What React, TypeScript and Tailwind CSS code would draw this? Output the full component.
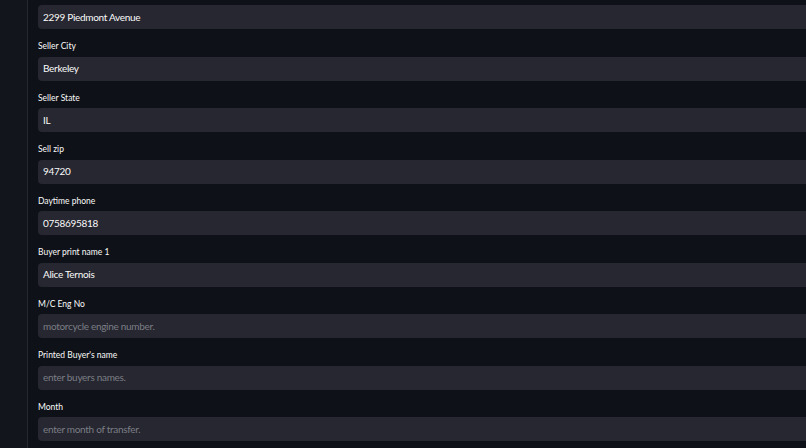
const fields = [
  { label: "Seller City", value: "Berkeley" },
  { label: "Seller State", value: "IL" },
  { label: "Sell zip", value: "94720" },
  { label: "Daytime phone", value: "0758695818" },
  { label: "Buyer print name 1", value: "Alice Ternois" },
  { label: "M/C Eng No", placeholder: "motorcycle engine number." },
  { label: "Printed Buyer's name", placeholder: "enter buyers names." },
  { label: "Month", placeholder: "enter month of transfer." },
];

const Input = ({ value, placeholder }: { value?: string; placeholder?: string }) => (
  <div className="flex h-[24px] items-center rounded-[4px] bg-[#262730] pl-[5px] text-[10px] tracking-[-0.3px]">
    {value ? (
      <span className="text-[#fafafa]">{value}</span>
    ) : (
      <span className="text-[#7b7d85]">{placeholder}</span>
    )}
  </div>
);

export default function App() {
  return (
    <div
      className="flex h-[448px] w-full overflow-hidden bg-[#0e1117]"
      style={{ fontFamily: "Lato, 'Noto Sans', sans-serif" }}
    >
      <div className="w-[28px] shrink-0 border-r border-[#262830] bg-[#13151c]" />
      <div className="mr-[-20px] flex-1 pl-[10px] pt-[5px]">
        <Input value="2299 Piedmont Avenue" />
        {fields.map((f) => (
          <div key={f.label} className="mt-[12px]">
            <div className="h-[11px] text-[8.5px] leading-[11px] text-[#fafafa]">{f.label}</div>
            <div className="mt-[4.5px]">
              <Input value={f.value} placeholder={f.placeholder} />
            </div>
          </div>
        ))}
      </div>
    </div>
  );
}
